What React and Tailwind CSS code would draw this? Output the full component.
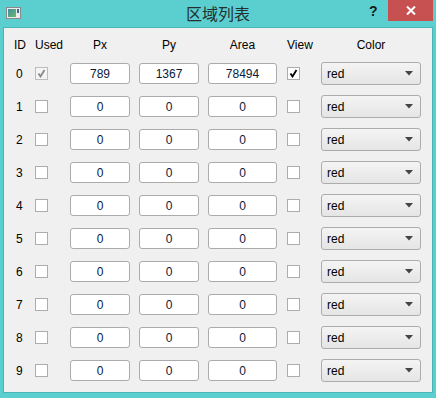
import React from "react";

const font = { fontFamily: '"Liberation Sans", Arial, sans-serif' };

function Check({ checked, disabled }) {
  return (
    <div
      className={`w-[13px] h-[13px] border flex items-center justify-center ${
        disabled ? "border-[#BCBCBC] bg-[#F4F4F4]" : "border-[#ADADAD] bg-white"
      }`}
    >
      {checked && (
        <svg width="9" height="9" viewBox="0 0 9 9">
          <path
            d="M1.5 4.5 L3.5 7.5 L7.5 1"
            fill="none"
            stroke={disabled ? "#8A8A8A" : "#000"}
            strokeWidth="1.8"
          />
        </svg>
      )}
    </div>
  );
}

function Field({ value, w }) {
  return (
    <div
      className={`${w} h-[21px] bg-white border border-[#ABABAB] rounded-[3px] flex items-center justify-center text-[12px] text-[#0A1A3A]`}
    >
      {value}
    </div>
  );
}

function Combo() {
  return (
    <div className="w-[100px] h-[23px] border border-[#ACACAC] rounded-[3px] bg-gradient-to-b from-[#F4F4F4] to-[#E5E5E5] flex items-center justify-between pl-[5px] pr-[7px] text-[12px] text-black">
      <span>red</span>
      <svg width="8" height="5" viewBox="0 0 8 5">
        <path d="M0 0 H8 L4 4.5 Z" fill="#444" />
      </svg>
    </div>
  );
}

const rows = Array.from({ length: 10 }, (_, i) =>
  i === 0 ? { px: "789", py: "1367", area: "78494" } : { px: "0", py: "0", area: "0" }
);

export default function App() {
  return (
    <div className="w-[436px] h-[398px] bg-[#5BCFCF] flex flex-col" style={font}>
      {/* Title bar */}
      <div className="h-[27px] relative flex items-start">
        <div className="absolute left-[6px] top-[7px] w-[15px] h-[12px] bg-[#8A8A8A] p-[1px]">
          <div className="w-full h-full bg-[#EDEDED] relative">
            <div className="absolute left-[1px] top-[1px] w-[8px] h-[8px] bg-gradient-to-br from-[#3F8F9F] to-[#6FB86A]" />
            <div className="absolute right-[1px] top-[1px] w-[2px] h-[4px] bg-[#2F6F8F]" />
          </div>
        </div>
        <div
          className="absolute left-[186px] top-[3px] text-[16px] leading-[20px] text-[#23302F]"
          style={{ fontFamily: '"Noto Sans CJK SC", sans-serif' }}
        >
          区域列表
        </div>
        <div className="absolute left-[369px] top-[2px] text-[14px] font-bold text-[#1A1A1A] leading-[18px]">
          ?
        </div>
        <div className="absolute left-[388px] top-0 w-[45px] h-[21px] bg-[#C75050] flex items-center justify-center">
          <svg width="10" height="9" viewBox="0 0 10 9">
            <path d="M1 0.5 L9 8.5 M9 0.5 L1 8.5" stroke="#fff" strokeWidth="2" />
          </svg>
        </div>
      </div>
      {/* Client */}
      <div className="ml-[3px] mr-[3px] h-[366px] border border-[#4AB5B5] bg-[#F0F0F0] pt-[8px] px-[10px] text-[12px] text-black">
        <div className="h-[18px] flex items-center leading-[18px]">
          <div className="w-[21px]">ID</div>
          <div className="w-[35px]">Used</div>
          <div className="w-[60px] text-center">Px</div>
          <div className="w-[9px]" />
          <div className="w-[60px] text-center">Py</div>
          <div className="w-[9px]" />
          <div className="w-[69px] text-center">Area</div>
          <div className="w-[10px]" />
          <div className="w-[34px]">View</div>
          <div className="w-[100px] text-center">Color</div>
        </div>
        <div className="mt-[9px] flex flex-col gap-[12px]">
          {rows.map((r, i) => (
            <div key={i} className="h-[21px] flex items-center">
              <div className="w-[21px] pl-[2px]">{i}</div>
              <div className="w-[35px]">
                <Check checked={i === 0} disabled={i === 0} />
              </div>
              <Field value={r.px} w="w-[60px]" />
              <div className="w-[9px]" />
              <Field value={r.py} w="w-[60px]" />
              <div className="w-[9px]" />
              <Field value={r.area} w="w-[69px]" />
              <div className="w-[10px]" />
              <div className="w-[34px]">
                <Check checked={i === 0} />
              </div>
              <Combo />
            </div>
          ))}
        </div>
      </div>
    </div>
  );
}
